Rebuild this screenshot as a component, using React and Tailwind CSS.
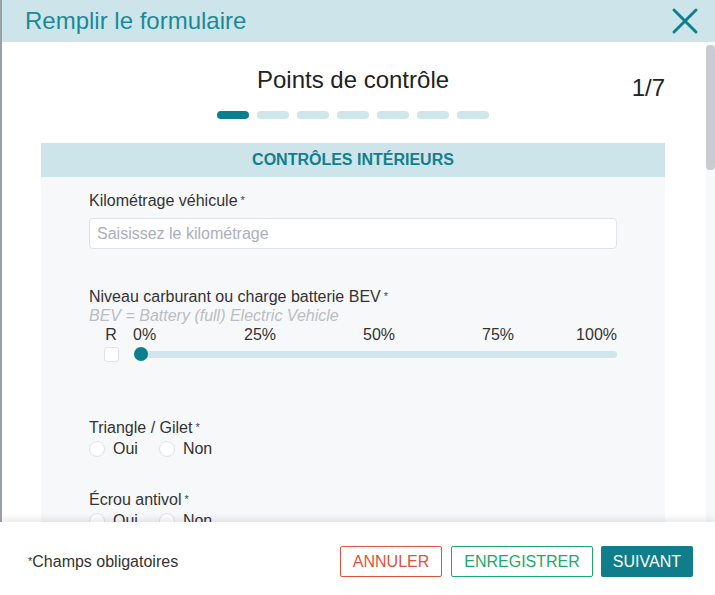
import React from "react";

const font = { fontFamily: '"Liberation Sans", Arial, sans-serif' };

const Req = () => <sup className="ml-[3px] text-[11px] text-[#444] relative top-[-2px]">*</sup>;

const Radio = ({ label }) => (
  <label className="flex items-center gap-[8px] text-[16px] text-[#333]">
    <span className="w-[16px] h-[16px] rounded-full bg-white border border-[#dfe2e6]" />
    {label}
  </label>
);

const YesNo = ({ title }) => (
  <div>
    <div className="text-[16px] leading-[20px] text-[#333]">
      {title}
      <Req />
    </div>
    <div className="flex items-center gap-[21px] mt-[2px] h-[18px]">
      <Radio label="Oui" />
      <Radio label="Non" />
    </div>
  </div>
);

export default function App() {
  const steps = [0, 1, 2, 3, 4, 5, 6];
  return (
    <div style={font} className="w-[715px] h-[595px] flex flex-col bg-white overflow-hidden relative">
      {/* backdrop edge */}
      <div className="absolute left-0 top-0 bottom-0 w-[2px] bg-[#9aa0a6]" />

      {/* Header */}
      <div className="h-[42px] flex items-center justify-between pl-[25px] pr-[16px] bg-[#cde5ea] shrink-0">
        <h1 className="text-[24px] leading-[28px] text-[#1b8a97]">Remplir le formulaire</h1>
        <svg width="28" height="28" viewBox="0 0 28 28" fill="none" stroke="#0f7f8c" strokeWidth="3" strokeLinecap="round">
          <path d="M3 3 L25 25 M25 3 L3 25" />
        </svg>
      </div>

      {/* Body */}
      <div className="flex flex-1 min-h-0">
        <div className="flex-1 overflow-hidden">
          <div className="w-[624px] mx-auto pt-[24px]">
            <div className="grid grid-cols-[1fr_auto_1fr] items-start h-[28px]">
              <div />
              <h2 className="text-[24px] leading-[28px] text-[#222]">Points de contrôle</h2>
              <div className="text-[24px] leading-[28px] text-[#222] text-right mt-[8px]">1/7</div>
            </div>
            <div className="flex justify-center gap-[8px] mt-[17px]">
              {steps.map((s) => (
                <div
                  key={s}
                  className={s === 0 ? "w-[32px] h-[8px] rounded-full bg-[#0b7f8e]" : "w-[32px] h-[8px] rounded-full bg-[#cfe6ea]"}
                />
              ))}
            </div>

            {/* Section */}
            <div className="mt-[24px] bg-[#f7f8fa]">
              <div className="h-[34px] flex items-center justify-center bg-[#cde5ea] text-[16px] font-bold text-[#11808d]">
                CONTRÔLES INTÉRIEURS
              </div>
              <div className="px-[48px] pt-[14px] pb-[40px]">
                <div className="text-[16px] leading-[20px] text-[#333]">
                  Kilométrage véhicule
                  <Req />
                </div>
                <div className="mt-[7px] h-[31px] rounded-[4px] border border-[#dfe3e6] bg-white flex items-center px-[7px] text-[16px] text-[#a9b0b8]">
                  Saisissez le kilométrage
                </div>

                <div className="mt-[38px] text-[16px] leading-[20px] text-[#333]">
                  Niveau carburant ou charge batterie BEV
                  <Req />
                </div>
                <div className="text-[16px] leading-[18px] italic text-[#b8bec4]">BEV = Battery (full) Electric Vehicle</div>
                <div className="flex mt-[1px]">
                  <div className="w-[44px] flex flex-col items-center">
                    <div className="text-[16px] leading-[18px] text-[#333]">R</div>
                    <div className="mt-[3px] w-[15px] h-[15px] rounded-[3px] bg-white border border-[#dfe2e6]" />
                  </div>
                  <div className="flex-1">
                    <div className="grid grid-cols-[67.5px_119px_119px_119px_1fr] text-[16px] leading-[18px] text-[#333]">
                      <span>0%</span>
                      <span className="text-center">25%</span>
                      <span className="text-center">50%</span>
                      <span className="text-center">75%</span>
                      <span className="text-right">100%</span>
                    </div>
                    <div className="mt-[3px] h-[15px] flex items-center pl-[8px]">
                      <div className="flex-1 h-[7px] rounded-full bg-[#cfe6ea] relative">
                        <div className="absolute left-[-7px] top-[-4px] w-[14px] h-[14px] rounded-full bg-[#0b7f8e]" />
                      </div>
                    </div>
                  </div>
                </div>

                <div className="mt-[56px]">
                  <YesNo title="Triangle / Gilet" />
                </div>
                <div className="mt-[32px]">
                  <YesNo title="Écrou antivol" />
                </div>
              </div>
            </div>
          </div>
        </div>
        {/* scrollbar */}
        <div className="w-[9px] bg-[#f7f8fa] pt-[3px]">
          <div className="h-[125px] rounded-[4px] bg-[#c8ccd1]" />
        </div>
      </div>

      {/* Footer */}
      <div className="h-[73px] shrink-0 bg-white flex items-center justify-between pl-[28px] pr-[22px] pt-[6px] shadow-[0_-4px_6px_rgba(0,0,0,0.08)] relative">
        <div className="text-[16px] text-[#333]">
          <sup className="text-[11px] relative top-[-2px]">*</sup>Champs obligatoires
        </div>
        <div className="flex items-center">
          <button className="h-[31px] px-[12px] rounded-[2px] border border-[#e0533d] text-[16px] text-[#e0533d] bg-white">ANNULER</button>
          <button className="ml-[9px] h-[31px] px-[12px] rounded-[2px] border border-[#1aab6b] text-[16px] text-[#1aab6b] bg-white">ENREGISTRER</button>
          <button className="ml-[8px] h-[31px] px-[12px] rounded-[2px] bg-[#0f7d8a] text-[16px] text-white">SUIVANT</button>
        </div>
      </div>
    </div>
  );
}
